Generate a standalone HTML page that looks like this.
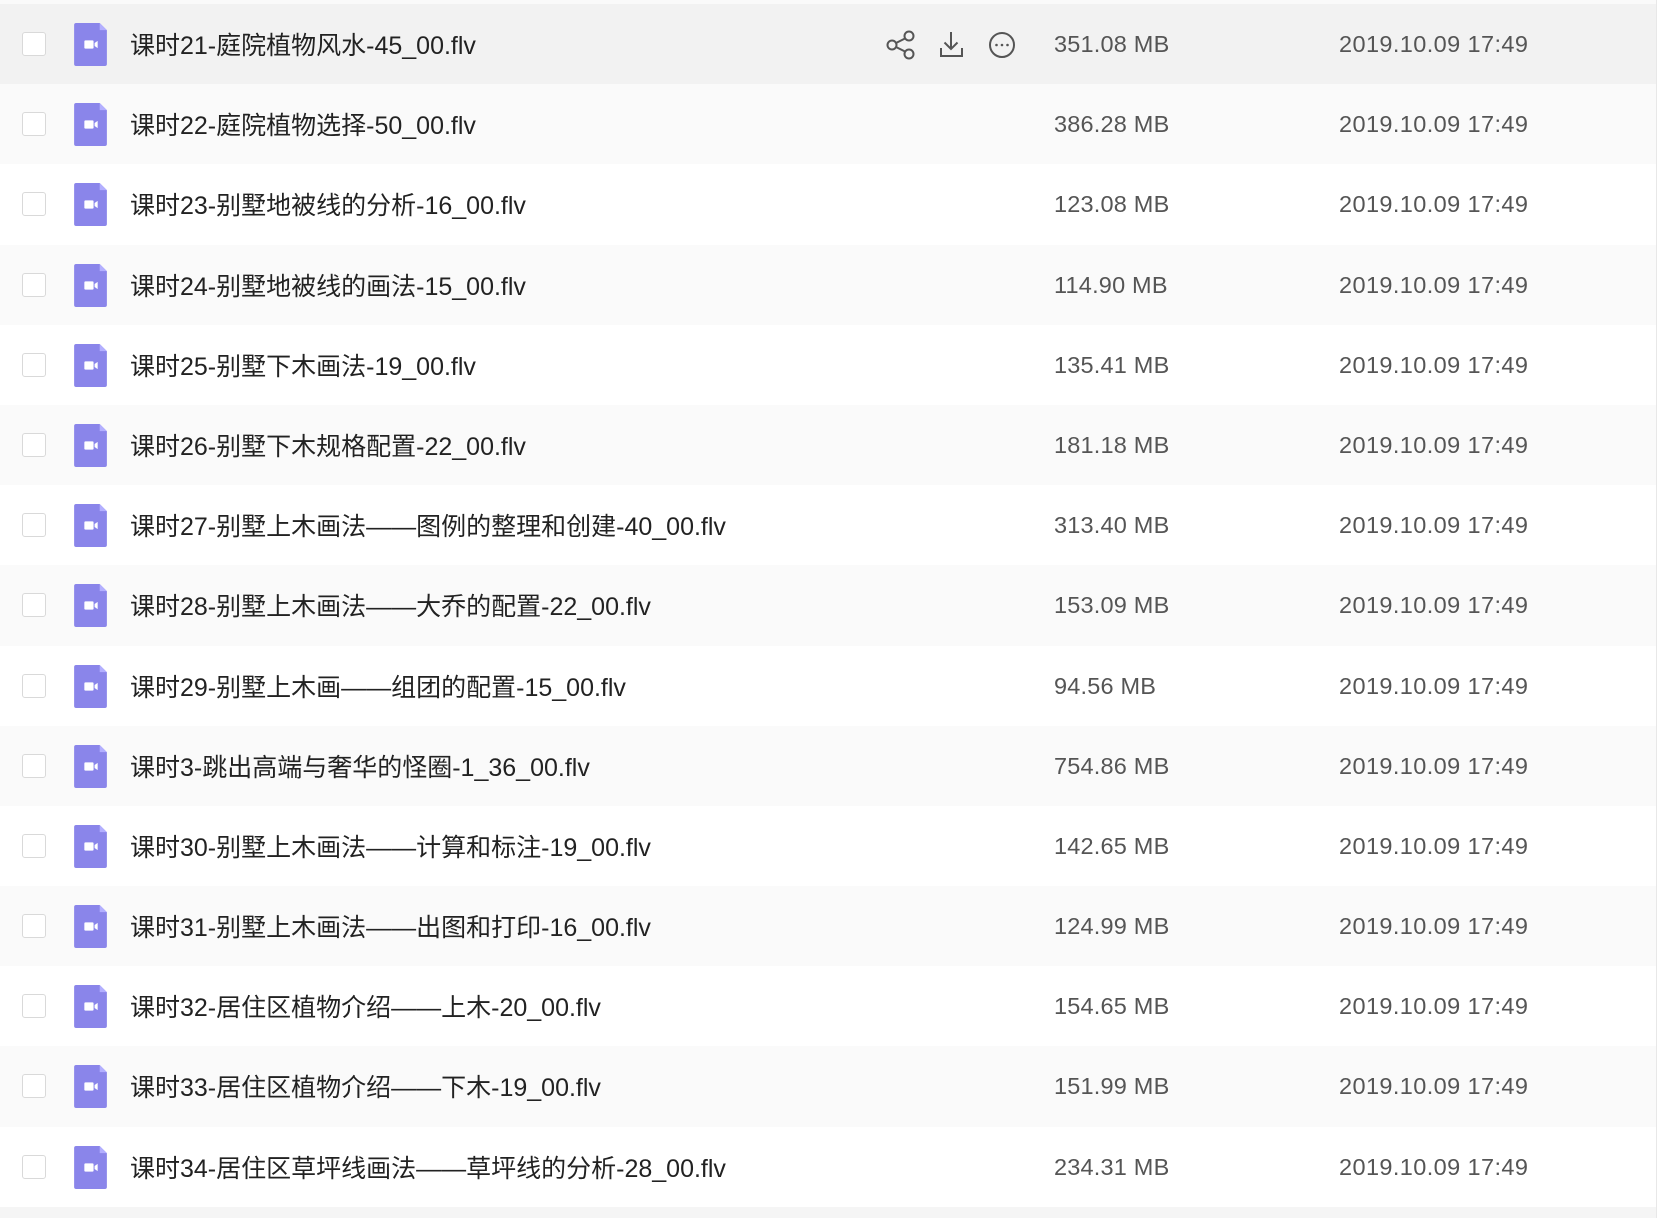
<!DOCTYPE html>
<html><head><meta charset="utf-8"><style>
body{margin:0;width:1676px;height:1218px;background:#fff;overflow:hidden;font-family:"Liberation Sans","Noto Sans CJK SC",sans-serif;position:relative}
.wrap{position:absolute;left:0;top:0;width:1656px;height:1218px;background:#f5f5f5;border-right:1px solid #e8e8e8}
.top{height:4px;background:#fafafa}
.row{position:relative;height:80.2px;background:#fff}
.row.e{background:#fafafa}
.row.h{background:#f2f2f2}
.cb{position:absolute;left:22px;top:28px;width:24px;height:24px;border:1.5px solid #d9d9d9;border-radius:3px;background:#fff;box-sizing:border-box}
.ic{position:absolute;left:72px;top:19px;width:37px;height:43px}
.nm{position:absolute;left:130px;top:22px;font-size:25px;color:#222;white-space:nowrap}
.sz{position:absolute;left:1054px;top:27px;font-size:23.5px;color:#555;letter-spacing:.2px}
.dt{position:absolute;left:1339px;top:27px;font-size:23.5px;color:#555;letter-spacing:.4px}
.ops{position:absolute;left:876px;top:11px}
</style></head><body><div class="wrap"><div class="top"></div>
<div class="row h"><div class="cb"></div><svg class="ic" viewBox="0 0 32 42"><path d="M2 0H25L32 7V40a2 2 0 0 1-2 2H2a2 2 0 0 1-2-2V2a2 2 0 0 1 2-2z" fill="#8a85ea"/><path d="M25 0L32 7H25z" fill="#b3afff"/><rect x="10" y="17" width="9" height="8" rx="1" fill="#fff"/><path d="M20 19.5L23 17.5V24.5L20 22.5z" fill="#fff"/></svg><div class="nm">课时21-庭院植物风水-45_00.flv</div>
<svg class="ops" width="150" height="50" viewBox="870 14 150 50" fill="none" stroke="#555" stroke-width="2"><circle cx="886" cy="44" r="4.5"/><circle cx="903" cy="35" r="4.5"/><circle cx="903" cy="53" r="4.5"/><path d="M890 42L899 37.5M890 46L899 50.5"/><path d="M945 31V48M938.5 41.5L945 48L951.5 41.5M935 47V55H956V47"/><circle cx="996" cy="44" r="12"/><circle cx="990.5" cy="44" r="1.3" fill="#555" stroke="none"/><circle cx="996" cy="44" r="1.3" fill="#555" stroke="none"/><circle cx="1001.5" cy="44" r="1.3" fill="#555" stroke="none"/></svg>
<div class="sz">351.08 MB</div><div class="dt">2019.10.09 17:49</div></div>
<div class="row e"><div class="cb"></div><svg class="ic" viewBox="0 0 32 42"><path d="M2 0H25L32 7V40a2 2 0 0 1-2 2H2a2 2 0 0 1-2-2V2a2 2 0 0 1 2-2z" fill="#8a85ea"/><path d="M25 0L32 7H25z" fill="#b3afff"/><rect x="10" y="17" width="9" height="8" rx="1" fill="#fff"/><path d="M20 19.5L23 17.5V24.5L20 22.5z" fill="#fff"/></svg><div class="nm">课时22-庭院植物选择-50_00.flv</div><div class="sz">386.28 MB</div><div class="dt">2019.10.09 17:49</div></div>
<div class="row"><div class="cb"></div><svg class="ic" viewBox="0 0 32 42"><path d="M2 0H25L32 7V40a2 2 0 0 1-2 2H2a2 2 0 0 1-2-2V2a2 2 0 0 1 2-2z" fill="#8a85ea"/><path d="M25 0L32 7H25z" fill="#b3afff"/><rect x="10" y="17" width="9" height="8" rx="1" fill="#fff"/><path d="M20 19.5L23 17.5V24.5L20 22.5z" fill="#fff"/></svg><div class="nm">课时23-别墅地被线的分析-16_00.flv</div><div class="sz">123.08 MB</div><div class="dt">2019.10.09 17:49</div></div>
<div class="row e"><div class="cb"></div><svg class="ic" viewBox="0 0 32 42"><path d="M2 0H25L32 7V40a2 2 0 0 1-2 2H2a2 2 0 0 1-2-2V2a2 2 0 0 1 2-2z" fill="#8a85ea"/><path d="M25 0L32 7H25z" fill="#b3afff"/><rect x="10" y="17" width="9" height="8" rx="1" fill="#fff"/><path d="M20 19.5L23 17.5V24.5L20 22.5z" fill="#fff"/></svg><div class="nm">课时24-别墅地被线的画法-15_00.flv</div><div class="sz">114.90 MB</div><div class="dt">2019.10.09 17:49</div></div>
<div class="row"><div class="cb"></div><svg class="ic" viewBox="0 0 32 42"><path d="M2 0H25L32 7V40a2 2 0 0 1-2 2H2a2 2 0 0 1-2-2V2a2 2 0 0 1 2-2z" fill="#8a85ea"/><path d="M25 0L32 7H25z" fill="#b3afff"/><rect x="10" y="17" width="9" height="8" rx="1" fill="#fff"/><path d="M20 19.5L23 17.5V24.5L20 22.5z" fill="#fff"/></svg><div class="nm">课时25-别墅下木画法-19_00.flv</div><div class="sz">135.41 MB</div><div class="dt">2019.10.09 17:49</div></div>
<div class="row e"><div class="cb"></div><svg class="ic" viewBox="0 0 32 42"><path d="M2 0H25L32 7V40a2 2 0 0 1-2 2H2a2 2 0 0 1-2-2V2a2 2 0 0 1 2-2z" fill="#8a85ea"/><path d="M25 0L32 7H25z" fill="#b3afff"/><rect x="10" y="17" width="9" height="8" rx="1" fill="#fff"/><path d="M20 19.5L23 17.5V24.5L20 22.5z" fill="#fff"/></svg><div class="nm">课时26-别墅下木规格配置-22_00.flv</div><div class="sz">181.18 MB</div><div class="dt">2019.10.09 17:49</div></div>
<div class="row"><div class="cb"></div><svg class="ic" viewBox="0 0 32 42"><path d="M2 0H25L32 7V40a2 2 0 0 1-2 2H2a2 2 0 0 1-2-2V2a2 2 0 0 1 2-2z" fill="#8a85ea"/><path d="M25 0L32 7H25z" fill="#b3afff"/><rect x="10" y="17" width="9" height="8" rx="1" fill="#fff"/><path d="M20 19.5L23 17.5V24.5L20 22.5z" fill="#fff"/></svg><div class="nm">课时27-别墅上木画法——图例的整理和创建-40_00.flv</div><div class="sz">313.40 MB</div><div class="dt">2019.10.09 17:49</div></div>
<div class="row e"><div class="cb"></div><svg class="ic" viewBox="0 0 32 42"><path d="M2 0H25L32 7V40a2 2 0 0 1-2 2H2a2 2 0 0 1-2-2V2a2 2 0 0 1 2-2z" fill="#8a85ea"/><path d="M25 0L32 7H25z" fill="#b3afff"/><rect x="10" y="17" width="9" height="8" rx="1" fill="#fff"/><path d="M20 19.5L23 17.5V24.5L20 22.5z" fill="#fff"/></svg><div class="nm">课时28-别墅上木画法——大乔的配置-22_00.flv</div><div class="sz">153.09 MB</div><div class="dt">2019.10.09 17:49</div></div>
<div class="row"><div class="cb"></div><svg class="ic" viewBox="0 0 32 42"><path d="M2 0H25L32 7V40a2 2 0 0 1-2 2H2a2 2 0 0 1-2-2V2a2 2 0 0 1 2-2z" fill="#8a85ea"/><path d="M25 0L32 7H25z" fill="#b3afff"/><rect x="10" y="17" width="9" height="8" rx="1" fill="#fff"/><path d="M20 19.5L23 17.5V24.5L20 22.5z" fill="#fff"/></svg><div class="nm">课时29-别墅上木画——组团的配置-15_00.flv</div><div class="sz">94.56 MB</div><div class="dt">2019.10.09 17:49</div></div>
<div class="row e"><div class="cb"></div><svg class="ic" viewBox="0 0 32 42"><path d="M2 0H25L32 7V40a2 2 0 0 1-2 2H2a2 2 0 0 1-2-2V2a2 2 0 0 1 2-2z" fill="#8a85ea"/><path d="M25 0L32 7H25z" fill="#b3afff"/><rect x="10" y="17" width="9" height="8" rx="1" fill="#fff"/><path d="M20 19.5L23 17.5V24.5L20 22.5z" fill="#fff"/></svg><div class="nm">课时3-跳出高端与奢华的怪圈-1_36_00.flv</div><div class="sz">754.86 MB</div><div class="dt">2019.10.09 17:49</div></div>
<div class="row"><div class="cb"></div><svg class="ic" viewBox="0 0 32 42"><path d="M2 0H25L32 7V40a2 2 0 0 1-2 2H2a2 2 0 0 1-2-2V2a2 2 0 0 1 2-2z" fill="#8a85ea"/><path d="M25 0L32 7H25z" fill="#b3afff"/><rect x="10" y="17" width="9" height="8" rx="1" fill="#fff"/><path d="M20 19.5L23 17.5V24.5L20 22.5z" fill="#fff"/></svg><div class="nm">课时30-别墅上木画法——计算和标注-19_00.flv</div><div class="sz">142.65 MB</div><div class="dt">2019.10.09 17:49</div></div>
<div class="row e"><div class="cb"></div><svg class="ic" viewBox="0 0 32 42"><path d="M2 0H25L32 7V40a2 2 0 0 1-2 2H2a2 2 0 0 1-2-2V2a2 2 0 0 1 2-2z" fill="#8a85ea"/><path d="M25 0L32 7H25z" fill="#b3afff"/><rect x="10" y="17" width="9" height="8" rx="1" fill="#fff"/><path d="M20 19.5L23 17.5V24.5L20 22.5z" fill="#fff"/></svg><div class="nm">课时31-别墅上木画法——出图和打印-16_00.flv</div><div class="sz">124.99 MB</div><div class="dt">2019.10.09 17:49</div></div>
<div class="row"><div class="cb"></div><svg class="ic" viewBox="0 0 32 42"><path d="M2 0H25L32 7V40a2 2 0 0 1-2 2H2a2 2 0 0 1-2-2V2a2 2 0 0 1 2-2z" fill="#8a85ea"/><path d="M25 0L32 7H25z" fill="#b3afff"/><rect x="10" y="17" width="9" height="8" rx="1" fill="#fff"/><path d="M20 19.5L23 17.5V24.5L20 22.5z" fill="#fff"/></svg><div class="nm">课时32-居住区植物介绍——上木-20_00.flv</div><div class="sz">154.65 MB</div><div class="dt">2019.10.09 17:49</div></div>
<div class="row e"><div class="cb"></div><svg class="ic" viewBox="0 0 32 42"><path d="M2 0H25L32 7V40a2 2 0 0 1-2 2H2a2 2 0 0 1-2-2V2a2 2 0 0 1 2-2z" fill="#8a85ea"/><path d="M25 0L32 7H25z" fill="#b3afff"/><rect x="10" y="17" width="9" height="8" rx="1" fill="#fff"/><path d="M20 19.5L23 17.5V24.5L20 22.5z" fill="#fff"/></svg><div class="nm">课时33-居住区植物介绍——下木-19_00.flv</div><div class="sz">151.99 MB</div><div class="dt">2019.10.09 17:49</div></div>
<div class="row"><div class="cb"></div><svg class="ic" viewBox="0 0 32 42"><path d="M2 0H25L32 7V40a2 2 0 0 1-2 2H2a2 2 0 0 1-2-2V2a2 2 0 0 1 2-2z" fill="#8a85ea"/><path d="M25 0L32 7H25z" fill="#b3afff"/><rect x="10" y="17" width="9" height="8" rx="1" fill="#fff"/><path d="M20 19.5L23 17.5V24.5L20 22.5z" fill="#fff"/></svg><div class="nm">课时34-居住区草坪线画法——草坪线的分析-28_00.flv</div><div class="sz">234.31 MB</div><div class="dt">2019.10.09 17:49</div></div>
</div>
</body></html>
